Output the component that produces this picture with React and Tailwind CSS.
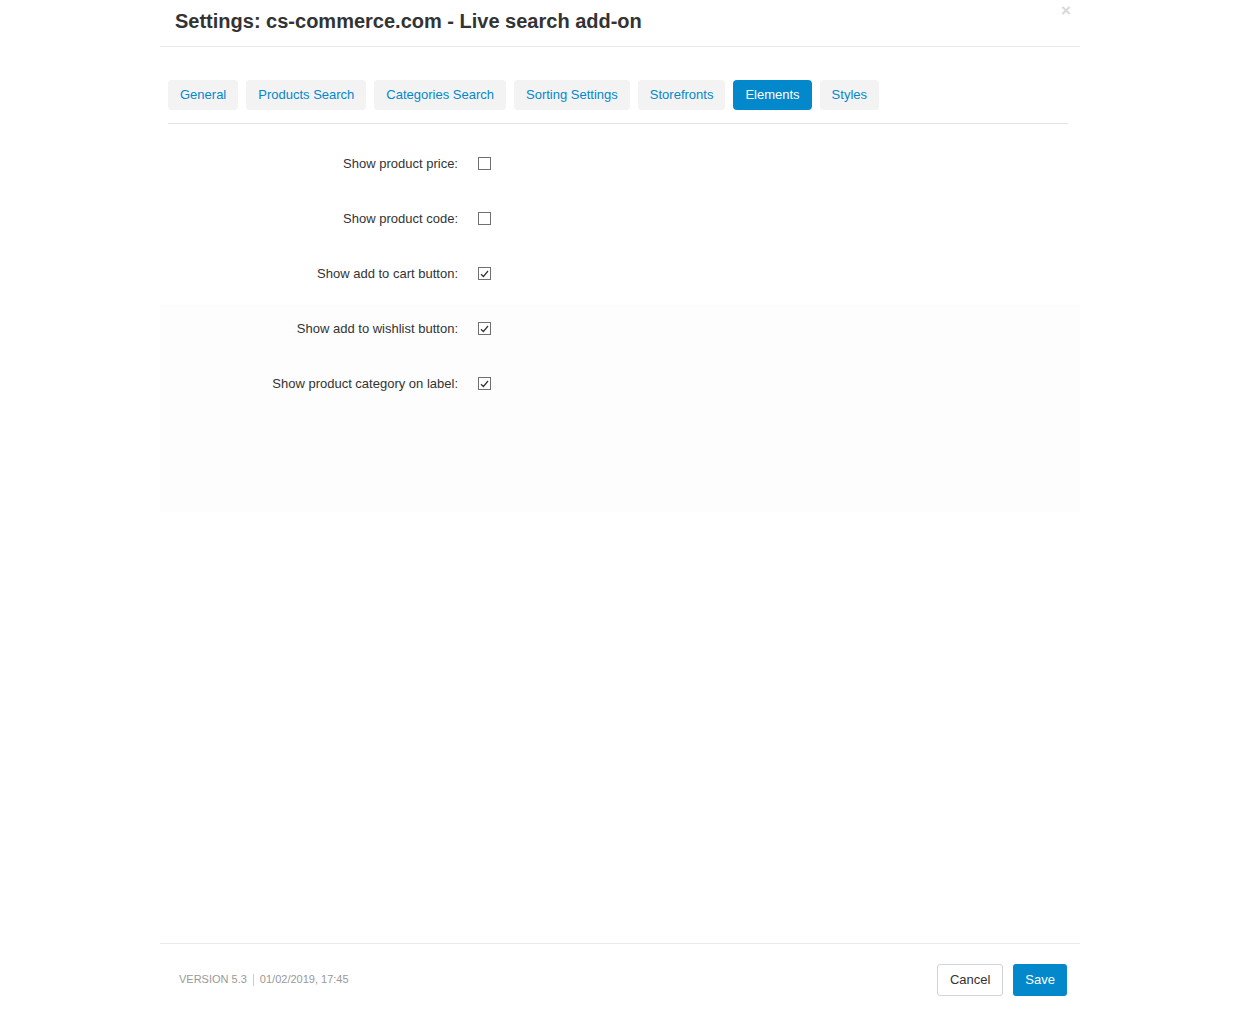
import { useState } from 'react'

const tabs = ['General', 'Products Search', 'Categories Search', 'Sorting Settings', 'Storefronts', 'Elements', 'Styles']

const rows = [
  { label: 'Show product price:', checked: false },
  { label: 'Show product code:', checked: false },
  { label: 'Show add to cart button:', checked: true },
  { label: 'Show add to wishlist button:', checked: true },
  { label: 'Show product category on label:', checked: true },
]

function Checkbox({ checked, onChange }) {
  return (
    <button
      onClick={onChange}
      className="w-[13px] h-[13px] border border-[#707070] bg-white flex items-center justify-center"
    >
      {checked && (
        <svg width="9" height="8" viewBox="0 0 9 8">
          <path d="M1 4.2 L3.4 6.5 L8 1" fill="none" stroke="#333" strokeWidth="1.2" />
        </svg>
      )}
    </button>
  )
}

function Row({ label, checked, onChange, top }) {
  return (
    <div className={`h-[55px] flex items-start ${top}`}>
      <label className="w-[298px] text-right text-[13px] leading-[16px]">{label}</label>
      <div className="ml-[20px] pt-[1px]">
        <Checkbox checked={checked} onChange={onChange} />
      </div>
    </div>
  )
}

export default function App() {
  const [active, setActive] = useState('Elements')
  const [values, setValues] = useState(rows.map((r) => r.checked))

  const toggle = (i) => setValues((v) => v.map((x, j) => (j === i ? !x : x)))

  return (
    <div className="w-[1240px] h-[1014px] bg-white font-['Liberation_Sans',Arial,sans-serif] text-[#333] flex justify-center">
      <div className="w-[920px] flex flex-col">
        {/* Header */}
        <div className="relative h-[47px] border-b border-[#e9e9e9] pl-[15px] pt-[8px]">
          <h1 className="text-[20px] font-bold leading-[26px] text-[#333]">
            Settings: cs-commerce.com - Live search add-on
          </h1>
          <span className="absolute right-[9px] top-[1px] text-[#d8d8d8] text-[17px] font-bold leading-[20px]">×</span>
        </div>

        {/* Tabs */}
        <div className="ml-[8px] mr-[12px] mt-[33px] flex gap-[8px] border-b border-[#e3e3e3] pb-[13px]">
          {tabs.map((t) => (
            <button
              key={t}
              onClick={() => setActive(t)}
              className={`h-[30px] px-[12px] rounded-[4px] text-[13px] ${
                active === t ? 'bg-[#0388cc] text-white' : 'bg-[#f3f3f3] text-[#0388cc]'
              }`}
            >
              {t}
            </button>
          ))}
        </div>

        {/* Body */}
        <div className="flex flex-col">
          {rows.slice(0, 3).map((r, i) => (
            <Row key={r.label} label={r.label} checked={values[i]} onChange={() => toggle(i)} top="pt-[32px]" />
          ))}
          <div className="bg-[#fdfdfd] h-[207px] mt-[16px] flex flex-col">
            {rows.slice(3).map((r, k) => (
              <Row
                key={r.label}
                label={r.label}
                checked={values[k + 3]}
                onChange={() => toggle(k + 3)}
                top="pt-[16px]"
              />
            ))}
          </div>
        </div>

        <div className="flex-1" />

        {/* Footer */}
        <div className="h-[71px] border-t border-[#e9e9e9] flex items-center justify-between pl-[19px] pr-[13px]">
          <div className="flex items-center text-[11px] text-[#999] mt-[1px]">
            <span>VERSION 5.3</span>
            <span className="mx-[6px] h-[12px] w-px bg-[#ccc]" />
            <span>01/02/2019, 17:45</span>
          </div>
          <div className="flex gap-[10px] mt-[2px]">
            <button className="h-[32px] px-[12px] border border-[#cfd5db] rounded-[3px] bg-white text-[13px] text-[#333]">
              Cancel
            </button>
            <button className="h-[32px] px-[12px] rounded-[3px] bg-[#0388cc] text-[13px] text-white">
              Save
            </button>
          </div>
        </div>
      </div>
    </div>
  )
}
